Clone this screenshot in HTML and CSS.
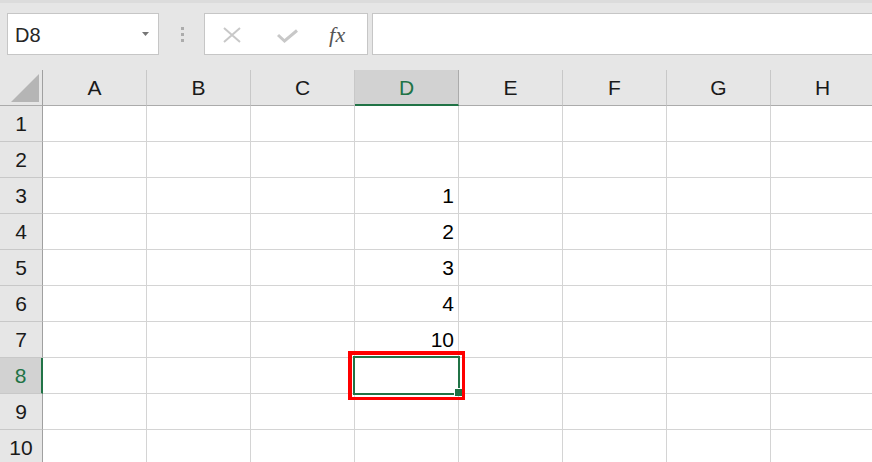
FILE: index.html
```html
<!DOCTYPE html>
<html lang="ja">
<head>
<meta charset="utf-8">
<title>Sheet</title>
<link rel="stylesheet" href="styles.css">
</head>
<body>
<div class="toolbar">
  <div class="namebox">
    <span class="nb-text">D8</span>
    <svg class="nb-arrow" width="7" height="4" viewBox="0 0 7 4"><polygon points="0,0 7,0 3.5,4" fill="#767676"/></svg>
  </div>
  <div class="sep"><i></i><i></i><i></i></div>
  <div class="fxbox">
    <svg class="ic-x" width="18" height="16" viewBox="0 0 18 16"><path d="M1 1 L17 15 M17 1 L1 15" stroke="#c8c8c8" stroke-width="2" fill="none"/></svg>
    <svg class="ic-ok" width="21" height="14" viewBox="0 0 21 14"><polyline points="1,6 7.5,12 20,1.5" stroke="#c8c8c8" stroke-width="3" fill="none"/></svg>
    <span class="ic-fx">fx</span>
  </div>
  <div class="finput"></div>
</div>
<div class="sheet">
  <div class="corner"><svg width="42" height="35" viewBox="0 0 42 35"><polygon points="39,4 39,32 11,32" fill="#b5b5b5"/></svg></div>
  <div class="ch">A</div><div class="ch">B</div><div class="ch">C</div><div class="ch ch-sel">D</div><div class="ch">E</div><div class="ch">F</div><div class="ch">G</div><div class="ch">H</div>

  <div class="rh">1</div><div class="c"></div><div class="c"></div><div class="c"></div><div class="c"></div><div class="c"></div><div class="c"></div><div class="c"></div><div class="c"></div>
  <div class="rh">2</div><div class="c"></div><div class="c"></div><div class="c"></div><div class="c"></div><div class="c"></div><div class="c"></div><div class="c"></div><div class="c"></div>
  <div class="rh">3</div><div class="c"></div><div class="c"></div><div class="c"></div><div class="c num">1</div><div class="c"></div><div class="c"></div><div class="c"></div><div class="c"></div>
  <div class="rh">4</div><div class="c"></div><div class="c"></div><div class="c"></div><div class="c num">2</div><div class="c"></div><div class="c"></div><div class="c"></div><div class="c"></div>
  <div class="rh">5</div><div class="c"></div><div class="c"></div><div class="c"></div><div class="c num">3</div><div class="c"></div><div class="c"></div><div class="c"></div><div class="c"></div>
  <div class="rh">6</div><div class="c"></div><div class="c"></div><div class="c"></div><div class="c num">4</div><div class="c"></div><div class="c"></div><div class="c"></div><div class="c"></div>
  <div class="rh">7</div><div class="c"></div><div class="c"></div><div class="c"></div><div class="c num">10</div><div class="c"></div><div class="c"></div><div class="c"></div><div class="c"></div>
  <div class="rh rh-sel">8</div><div class="c"></div><div class="c"></div><div class="c"></div><div class="c active"><div class="mark"></div><div class="cursor"><i class="handle"></i></div></div><div class="c"></div><div class="c"></div><div class="c"></div><div class="c"></div>
  <div class="rh">9</div><div class="c"></div><div class="c"></div><div class="c"></div><div class="c"></div><div class="c"></div><div class="c"></div><div class="c"></div><div class="c"></div>
  <div class="rh">10</div><div class="c"></div><div class="c"></div><div class="c"></div><div class="c"></div><div class="c"></div><div class="c"></div><div class="c"></div><div class="c"></div>
</div>
</body>
</html>
```
FILE: styles.css
```css
* { box-sizing: border-box; }
html, body { margin: 0; padding: 0; }
body {
  width: 872px;
  height: 462px;
  overflow: hidden;
  background: #e6e6e6;
  font-family: "Liberation Sans", Arial, sans-serif;
  color: #1e1e1e;
}
.toolbar {
  height: 70px;
  display: flex;
  align-items: flex-start;
  padding: 10px 0 0 7px;
  border-top: 3px solid #dcdcdc;
  background: #e6e6e6;
}
.namebox {
  width: 152px;
  height: 42px;
  background: #fff;
  border: 1px solid #c6c6c6;
  display: flex;
  align-items: center;
  padding-left: 7px;
  padding-right: 9px;
}
.nb-text {
  flex: 1;
  font-size: 20px;
  color: #262626;
  margin-top: 2px;
}
.nb-arrow { display: block; }
.sep {
  width: 45px;
  height: 42px;
  display: flex;
  flex-direction: column;
  align-items: center;
  justify-content: center;
  gap: 3px;
  padding-left: 1px;
}
.sep i {
  display: block;
  width: 3px;
  height: 3px;
  background: #acacac;
}
.fxbox {
  width: 164px;
  height: 42px;
  background: #fff;
  border: 1px solid #c6c6c6;
  display: flex;
  align-items: center;
  padding-left: 18px;
}
.ic-x { display: block; margin-top: 2px; }
.ic-ok { display: block; margin-left: 36px; margin-top: 4px; }
.ic-fx {
  margin-left: 31px;
  font-family: "Liberation Serif", "Times New Roman", serif;
  font-style: italic;
  font-size: 22px;
  color: #555;
  letter-spacing: 0.5px;
  margin-top: 1px;
}
.finput {
  flex: 1;
  height: 42px;
  margin-left: 4px;
  margin-right: -4px;
  background: #fff;
  border: 1px solid #c6c6c6;
}
.sheet {
  display: grid;
  grid-template-columns: 43px repeat(8, 104px);
  grid-auto-rows: 36px;
  width: 875px;
  background: #fff;
}
.corner {
  background: #e6e6e6;
  border-right: 1px solid #a0a0a0;
  border-bottom: 1px solid #ababab;
}
.corner svg { display: block; }
.ch, .rh {
  background: #e6e6e6;
  font-size: 21px;
  line-height: 21px;
  display: flex;
  align-items: center;
  justify-content: center;
  color: #1a1a1a;
}
.ch {
  border-right: 1px solid #c8c8c8;
  border-bottom: 1px solid #ababab;
}
.ch-sel {
  background: #d2d2d2;
  color: #217346;
  border-right-color: #ababab;
  border-bottom: 2px solid #217346;
}
.rh {
  border-right: 1px solid #a0a0a0;
  border-bottom: 1px solid #c8c8c8;
}
.rh-sel {
  background: #d2d2d2;
  color: #217346;
  border-right: 2px solid #217346;
}
.c {
  border-right: 1px solid #d4d4d4;
  border-bottom: 1px solid #d4d4d4;
  font-size: 21px;
  line-height: 21px;
  color: #000;
}
.num {
  display: flex;
  align-items: center;
  justify-content: flex-end;
  padding-right: 4px;
}
.active { position: relative; }
.cursor {
  position: absolute;
  left: -2px;
  top: -2px;
  width: 107px;
  height: 39px;
  border: 2px solid #217346;
}
.handle {
  position: absolute;
  right: -4px;
  bottom: -3px;
  width: 8px;
  height: 8px;
  background: #217346;
  border: 1px solid #fff;
  border-right: 0;
  border-bottom: 0;
}
.mark {
  position: absolute;
  left: -7px;
  top: -7px;
  width: 117px;
  height: 49px;
  border: 4px solid #ff0000;
  border-right-width: 3px;
  border-bottom-width: 3px;
}
```
